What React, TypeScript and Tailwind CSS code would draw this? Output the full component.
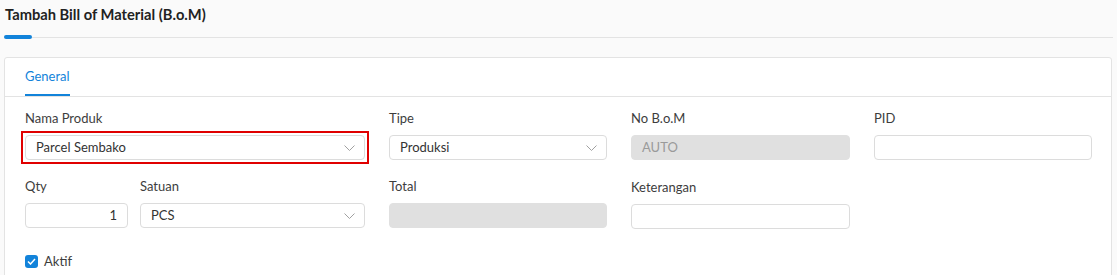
import React from 'react';

const font = { fontFamily: 'Lato, "Liberation Sans", sans-serif' };

function Chevron() {
  return (
    <svg width="11" height="6" viewBox="0 0 11 6" fill="none" className="shrink-0">
      <path d="M0.5 0.5L5.5 5.5L10.5 0.5" stroke="#a0a0a0" strokeWidth="1" />
    </svg>
  );
}

function Label({ children, className = '' }: { children: React.ReactNode; className?: string }) {
  return <div className={`h-4 mb-[9px] text-[13px] leading-4 text-[#3d3d3d] ${className}`}>{children}</div>;
}

function Select({ value }: { value: string }) {
  return (
    <div className="h-[25px] flex items-center justify-between pl-2.5 pr-[9px] bg-white border border-[#dcdcdc] rounded text-[13px] text-[#333]">
      <span>{value}</span>
      <Chevron />
    </div>
  );
}

function Input({ value = '', disabled = false, right = false }: { value?: string; disabled?: boolean; right?: boolean }) {
  return (
    <div
      className={`h-[25px] flex items-center px-2.5 rounded text-[13px] ${
        disabled ? 'bg-[#e0e0e0] text-[#9a9a9a] border border-[#e0e0e0]' : 'bg-white border border-[#dcdcdc] text-[#333]'
      } ${right ? 'justify-end' : ''}`}
    >
      {value}
    </div>
  );
}

export default function App() {
  return (
    <div className="min-h-screen bg-[#fafafa] px-1 pt-[6px]" style={font}>
      {/* Header */}
      <h1 className="text-[14.7px] font-bold text-[#222] leading-4 pl-px">Tambah Bill of Material (B.o.M)</h1>
      <div className="relative mt-[13px] h-[5px]">
        <div className="absolute left-0 right-0 top-[2px] h-px bg-[#e3e3e3]" />
        <div className="absolute left-0 top-0 w-[28px] h-[4px] rounded-full bg-[#1283da]" />
      </div>

      {/* Card */}
      <div className="mt-[17px] mr-px bg-white border border-[#e3e3e3] rounded-t-[3px]">
        <div className="h-[39px] border-b border-[#e3e3e3] px-5 flex items-end">
          <div className="h-full flex items-center relative text-[13px] text-[#1283da]">
            General
            <div className="absolute left-0 right-0 bottom-0 h-[2px] bg-[#1283da]" />
          </div>
        </div>

        <div className="px-5 pt-[13px] pb-4">
          <div className="grid grid-cols-[340px_218px_219px_218px] gap-x-6">
            <div>
              <Label>Nama Produk</Label>
              <div className="outline-2 outline-[#e00000] outline-offset-2">
                <Select value="Parcel Sembako" />
              </div>
            </div>
            <div>
              <Label>Tipe</Label>
              <Select value="Produksi" />
            </div>
            <div>
              <Label>No B.o.M</Label>
              <Input value="AUTO" disabled />
            </div>
            <div>
              <Label>PID</Label>
              <Input />
            </div>
          </div>

          <div className="grid grid-cols-[340px_218px_219px_218px] gap-x-6 mt-[18px]">
            <div className="grid grid-cols-[103px_1fr] gap-x-3">
              <div>
                <Label>Qty</Label>
                <Input value="1" right />
              </div>
              <div>
                <Label>Satuan</Label>
                <Select value="PCS" />
              </div>
            </div>
            <div>
              <Label>Total</Label>
              <Input disabled />
            </div>
            <div className="pt-px">
              <Label>Keterangan</Label>
              <Input />
            </div>
            <div />
          </div>

          <div className="mt-[23px] flex items-center gap-[6px]">
            <div className="w-[13px] h-[13px] rounded-[3px] bg-[#1283da] flex items-center justify-center">
              <svg width="9" height="7" viewBox="0 0 9 7" fill="none">
                <path d="M1 3.5L3.5 6L8 1" stroke="white" strokeWidth="1.5" />
              </svg>
            </div>
            <span className="text-[13px] text-[#3d3d3d]">Aktif</span>
          </div>
        </div>
      </div>
    </div>
  );
}
